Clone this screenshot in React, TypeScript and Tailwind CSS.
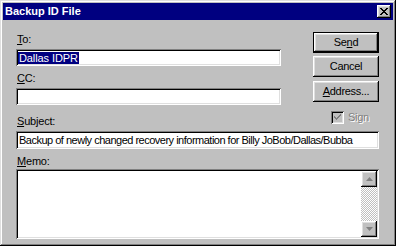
import React from 'react'

const font = { fontFamily: '"Liberation Sans", Arial, sans-serif' }

// sunken edit field (Win95)
const sunken =
  'bg-white shadow-[inset_1px_1px_#808080,inset_-1px_-1px_#ffffff,inset_2px_2px_#000000,inset_-2px_-2px_#dfdfdf]'
// raised button
const raised =
  'bg-[#c0c0c0] shadow-[inset_-1px_-1px_#000000,inset_1px_1px_#ffffff,inset_-2px_-2px_#808080,inset_2px_2px_#dfdfdf]'

function Label({ children, className = '' }: { children: React.ReactNode; className?: string }) {
  return <div className={`h-[13px] leading-[13px] text-[11px] tracking-[-0.2px] text-black pl-[1px] ${className}`}>{children}</div>
}

function Button({ children, isDefault, className = '' }: { children: React.ReactNode; isDefault?: boolean; className?: string }) {
  return (
    <div
      className={`w-[66px] h-[21px] flex items-center justify-center text-[11px] tracking-[-0.3px] text-black ${
        isDefault
          ? 'border border-black bg-[#c0c0c0] shadow-[inset_-1px_-1px_#000000,inset_1px_1px_#ffffff,inset_-2px_-2px_#808080,inset_2px_2px_#dfdfdf]'
          : raised
      } ${className}`}
    >
      {children}
    </div>
  )
}

function Arrow({ up }: { up?: boolean }) {
  return (
    <div className={`w-[16px] h-[16px] flex items-center justify-center ${raised}`}>
      <svg width="7" height="4" viewBox="0 0 7 4">
        {up ? <polygon points="3.5,0 7,4 0,4" fill="#808080" /> : <polygon points="0,0 7,0 3.5,4" fill="#808080" />}
      </svg>
    </div>
  )
}

export default function App() {
  return (
    <div
      style={font}
      className="w-[396px] h-[246px] p-[3px] flex flex-col bg-[#c0c0c0] shadow-[inset_-1px_-1px_#000000,inset_1px_1px_#dfdfdf,inset_-2px_-2px_#808080,inset_2px_2px_#ffffff]"
    >
      {/* 标题栏 */}
      <div className="h-[17px] bg-[#000080] flex items-center justify-between pl-[2px] pr-[2px]">
        <span className="text-white font-bold text-[11px] leading-[13px]">Backup ID File</span>
        <div className={`w-[14px] h-[13px] flex items-center justify-center ${raised}`}>
          <svg width="8" height="7" viewBox="0 0 8 7" shapeRendering="crispEdges">
            <path d="M0 0h2v1h-2zM6 0h2v1h-2zM1 1h2v1h-2zM5 1h2v1h-2zM2 2h4v1h-4zM3 3h2v1h-2zM2 4h4v1h-4zM1 5h2v1h-2zM5 5h2v1h-2zM0 6h2v1h-2zM6 6h2v1h-2z" fill="#000" />
          </svg>
        </div>
      </div>

      <div className="flex-1 flex flex-col pl-[13px] pr-[14px]">
        <div className="flex gap-[32px]">
          {/* 左侧字段 */}
          <div className="w-[265px] flex flex-col">
            <Label className="mt-[13px]">
              <span className="underline">T</span>o:
            </Label>
            <div className={`mt-[3px] h-[17px] flex items-center pl-[2px] text-[11px] tracking-[-0.1px] ${sunken}`}>
              <span className="bg-[#000080] text-white px-[1px] leading-[12px]">Dallas IDPR</span>
            </div>
            <Label className="mt-[6px]">
              <span className="underline">C</span>C:
            </Label>
            <div className={`mt-[3px] h-[17px] ${sunken}`} />
            <Label className="mt-[10px]">
              <span className="underline">S</span>ubject:
            </Label>
          </div>

          {/* 右侧按钮 */}
          <div className="flex flex-col">
            <Button isDefault className="mt-[12px]">
              Se<span className="underline">n</span>d
            </Button>
            <Button className="mt-[3px]">Cancel</Button>
            <Button className="mt-[4px]">
              <span className="underline">A</span>ddress...
            </Button>
            <div className="mt-[9px] ml-[18px] flex items-center gap-[4px]">
              <div className="w-[13px] h-[13px] flex items-center justify-center bg-[#c0c0c0] shadow-[inset_1px_1px_#808080,inset_-1px_-1px_#ffffff,inset_2px_2px_#000000,inset_-2px_-2px_#dfdfdf]">
                <svg width="7" height="7" viewBox="0 0 7 7" shapeRendering="crispEdges">
                  <path d="M6 0h1v1h-1zM5 1h2v1h-2zM0 2h1v1h-1zM4 2h2v1h-2zM0 3h2v1h-2zM3 3h2v1h-2zM1 4h3v1h-3zM2 5h1v1h-1z" fill="#808080" />
                </svg>
              </div>
              <span className="text-[11px] leading-[13px] tracking-[-0.3px] text-[#808080] [text-shadow:1px_1px_#ffffff]">
                Si<span className="underline">g</span>n
              </span>
            </div>
          </div>
        </div>

        <div className={`mt-[3px] h-[18px] flex items-center pl-[3px] text-[11px] tracking-[-0.5px] whitespace-nowrap overflow-hidden text-black ${sunken}`}>
          Backup of newly changed recovery information for Billy JoBob/Dallas/Bubba
        </div>

        <Label className="mt-[6px]">
          <span className="underline">M</span>emo:
        </Label>

        <div className={`mt-[1px] h-[70px] p-[2px] flex justify-end ${sunken}`}>
          <div className="w-[16px] flex flex-col">
            <Arrow up />
            <div className="flex-1 bg-[repeating-conic-gradient(#c0c0c0_0%_25%,#ffffff_0%_50%)] bg-[length:2px_2px]" />
            <Arrow />
          </div>
        </div>
      </div>
    </div>
  )
}
